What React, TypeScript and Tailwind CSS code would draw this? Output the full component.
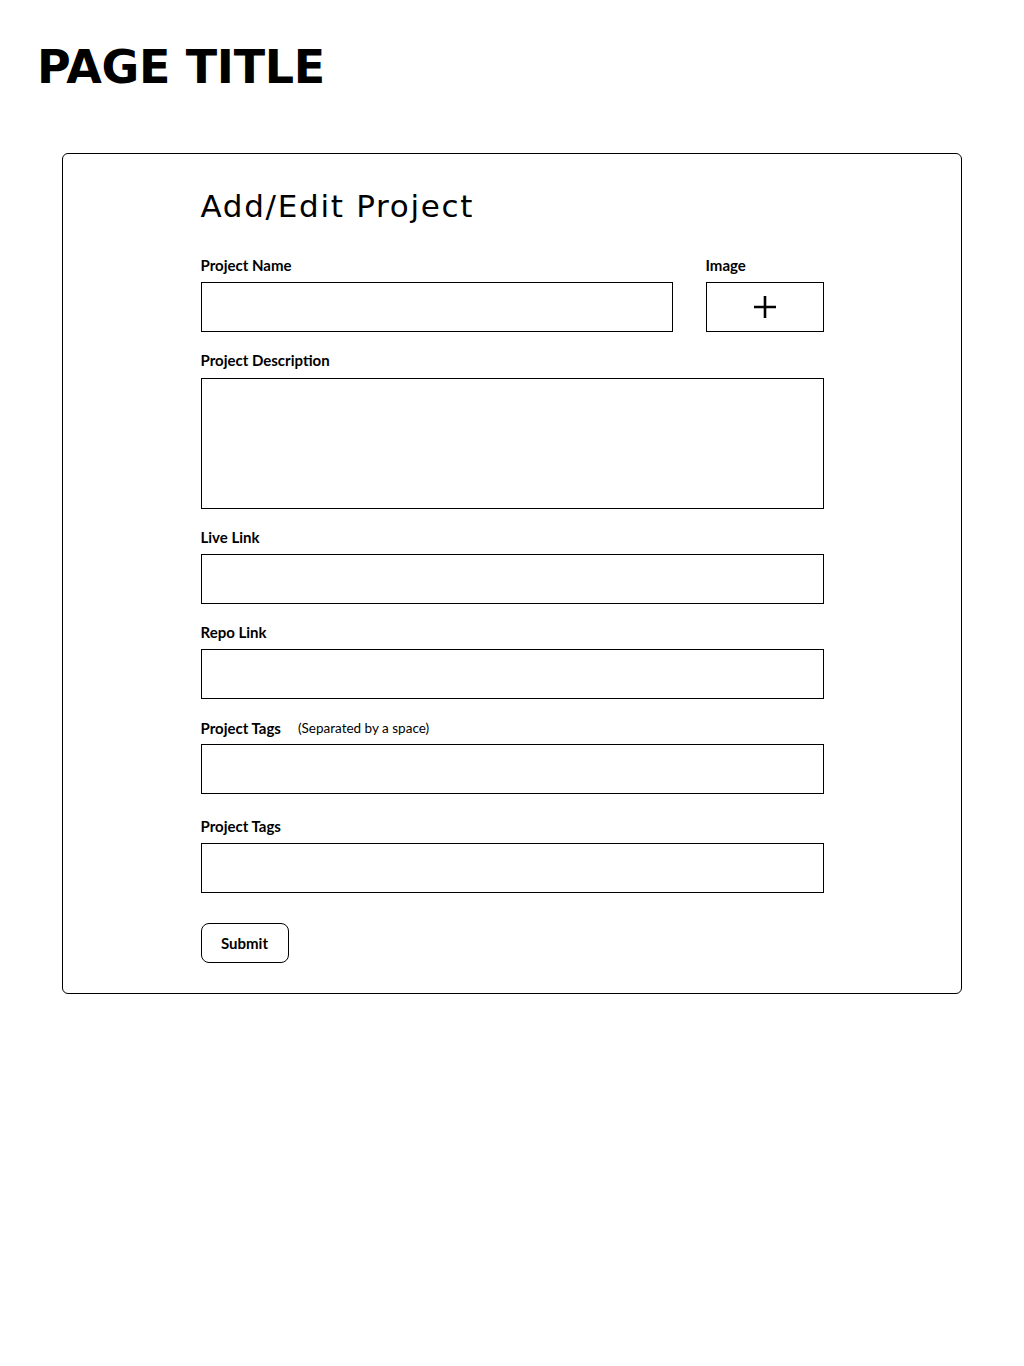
export default function App() {
  const label = 'block h-5 text-[15px] leading-5 font-bold text-black';
  const input = 'block w-full h-[50px] border border-black bg-white';

  return (
    <div className="min-h-[1366px] w-full bg-white text-black" style={{ fontFamily: 'Lato, "Noto Sans", sans-serif' }}>
      <h1 className="pl-[37px] pt-[37px] text-[46px] leading-[60px] font-bold tracking-[-0.3px] text-black" style={{ fontFamily: '"DejaVu Sans", sans-serif' }}>
        PAGE TITLE
      </h1>

      <div className="ml-[62px] mt-[56px] w-[900px] rounded-md border border-black pt-[30px] pb-[30px]">
        <div className="mx-auto w-[623px]">
          <h2 className="text-[31px] leading-[44px] tracking-[1.7px] text-black" style={{ fontFamily: '"DejaVu Sans", sans-serif' }}>
            Add/Edit Project
          </h2>

          {/* Name + image */}
          <div className="mt-[27px] flex gap-[33px]">
            <div className="flex-1">
              <label className={label}>Project Name</label>
              <div className={`mt-[7px] ${input}`} />
            </div>
            <div className="w-[118px]">
              <label className={label}>Image</label>
              <button className="mt-[7px] flex h-[50px] w-full items-center justify-center border border-black bg-white">
                <svg width="24" height="24" viewBox="0 0 24 24" fill="none" stroke="black" strokeWidth="2.6">
                  <path d="M12 1v22M1 12h22" />
                </svg>
              </button>
            </div>
          </div>

          <div className="mt-[18px]">
            <label className={label}>Project Description</label>
            <div className="mt-[8px] block h-[131px] w-full border border-black" />
          </div>

          <div className="mt-[18px]">
            <label className={label}>Live Link</label>
            <div className={`mt-[7px] ${input}`} />
          </div>

          <div className="mt-[18px]">
            <label className={label}>Repo Link</label>
            <div className={`mt-[7px] ${input}`} />
          </div>

          <div className="mt-[19px]">
            <div className="flex items-center gap-[17px]">
              <label className={label}>Project Tags</label>
              <span className="text-[13.5px] leading-5 text-black">(Separated by a space)</span>
            </div>
            <div className={`mt-[6px] ${input}`} />
          </div>

          <div className="mt-[22px]">
            <label className={label}>Project Tags</label>
            <div className={`mt-[7px] ${input}`} />
          </div>

          <button className="mt-[30px] h-10 w-[88px] rounded-lg border border-black bg-white text-[15px] font-bold text-black">
            Submit
          </button>
        </div>
      </div>
    </div>
  );
}
